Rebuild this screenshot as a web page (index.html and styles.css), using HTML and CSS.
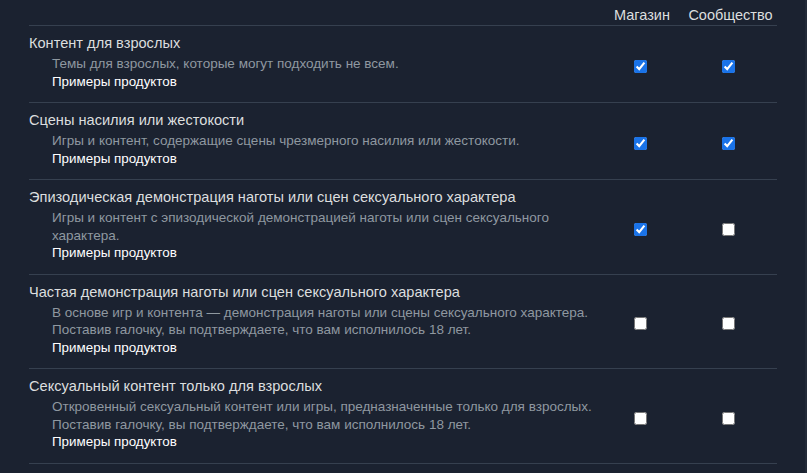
FILE: index.html
```html
<!DOCTYPE html>
<html lang="ru">
<head>
<meta charset="utf-8">
<link rel="stylesheet" href="styles.css">
</head>
<body>
<div class="prefs">
  <div class="row head">
    <div class="cell-main"></div>
    <div class="col">Магазин</div>
    <div class="col">Сообщество</div>
  </div>

  <div class="row">
    <div class="cell-main">
      <div class="title">Контент для взрослых</div>
      <div class="desc">Темы для взрослых, которые могут подходить не всем.</div>
      <div class="link">Примеры продуктов</div>
    </div>
    <div class="col"><input type="checkbox" checked></div>
    <div class="col"><input type="checkbox" checked></div>
  </div>

  <div class="row">
    <div class="cell-main">
      <div class="title">Сцены насилия или жестокости</div>
      <div class="desc">Игры и контент, содержащие сцены чрезмерного насилия или жестокости.</div>
      <div class="link">Примеры продуктов</div>
    </div>
    <div class="col"><input type="checkbox" checked></div>
    <div class="col"><input type="checkbox" checked></div>
  </div>

  <div class="row">
    <div class="cell-main">
      <div class="title">Эпизодическая демонстрация наготы или сцен сексуального характера</div>
      <div class="desc">Игры и контент с эпизодической демонстрацией наготы или сцен сексуального характера.</div>
      <div class="link">Примеры продуктов</div>
    </div>
    <div class="col"><input type="checkbox" checked></div>
    <div class="col"><input type="checkbox"></div>
  </div>

  <div class="row">
    <div class="cell-main">
      <div class="title">Частая демонстрация наготы или сцен сексуального характера</div>
      <div class="desc">В основе игр и контента — демонстрация наготы или сцены сексуального характера.<br>Поставив галочку, вы подтверждаете, что вам исполнилось 18 лет.</div>
      <div class="link">Примеры продуктов</div>
    </div>
    <div class="col"><input type="checkbox"></div>
    <div class="col"><input type="checkbox"></div>
  </div>

  <div class="row">
    <div class="cell-main">
      <div class="title">Сексуальный контент только для взрослых</div>
      <div class="desc">Откровенный сексуальный контент или игры, предназначенные только для взрослых.<br>Поставив галочку, вы подтверждаете, что вам исполнилось 18 лет.</div>
      <div class="link">Примеры продуктов</div>
    </div>
    <div class="col"><input type="checkbox"></div>
    <div class="col"><input type="checkbox"></div>
  </div>
</div>
</body>
</html>
```

FILE: styles.css
```css
html, body {
  margin: 0;
  padding: 0;
  background: #1b2230;
  height: 100%;
}
body {
  font-family: "Liberation Sans", Arial, sans-serif;
  color: #dcdedf;
  box-shadow: inset -2px 0 0 #222a38;
}
.prefs {
  margin-left: 29px;
  width: 748px;
}
.row {
  display: grid;
  grid-template-columns: 1fr 80px 97px;
  align-items: center;
  border-bottom: 1px solid #36404f;
  padding: 8px 0 12px;
}
.row.head {
  padding: 6px 0 1px;
  font-size: 14.5px;
  line-height: 18px;
  color: #dcdedf;
}
.col {
  display: flex;
  justify-content: center;
  padding-top: 9px;
}
.head .col {
  padding-top: 0;
  padding-left: 4px;
}
.col input {
  margin: 0;
  width: 13px;
  height: 13px;
  accent-color: #1a73e8;
}
.title {
  font-size: 14.6px;
  line-height: 18px;
  color: #dcdedf;
}
.desc {
  margin: 3px 0 0 23px;
  font-size: 13.5px;
  line-height: 17.5px;
  color: #8f98a0;
}
.link {
  margin-left: 23px;
  font-size: 13.4px;
  line-height: 17.5px;
  color: #ffffff;
}
```
